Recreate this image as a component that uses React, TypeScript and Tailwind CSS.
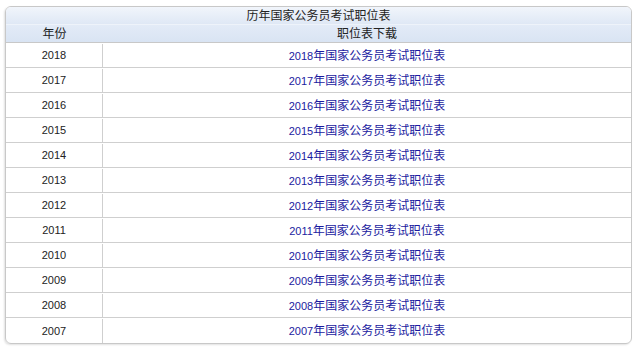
import React from 'react';

const YEARS = [2018, 2017, 2016, 2015, 2014, 2013, 2012, 2011, 2010, 2009, 2008, 2007];

const cjk = "font-['Liberation_Sans','Noto_Sans_CJK_SC',sans-serif]";

export default function App() {
  return (
    <div className={`w-[638px] h-[352px] bg-white pt-[6px] pl-[5px] ${cjk} text-[12px]`}>
      <div className="w-[627px] border border-[#c8c8c8] rounded-[6px] overflow-hidden shadow-[-1px_1px_2px_rgba(0,0,0,0.12)]">
        {/* title bar */}
        <div className="h-[18px] flex items-center justify-center bg-gradient-to-b from-[#f1f5fb] to-[#dfe8f5] text-[#222] border-b border-[#eef3fa]">
          历年国家公务员考试职位表
        </div>
        {/* column header */}
        <div className="h-[18px] pt-px flex bg-gradient-to-b from-[#e3ebf7] to-[#d9e4f3] text-[#222] border-b border-[#c8c8c8]">
          <div className="w-[97px] flex items-center justify-center">年份</div>
          <div className="flex-1 flex items-center justify-center">职位表下载</div>
        </div>
        {YEARS.map((y, i) => (
          <div
            key={y}
            className={`h-[25px] pt-px flex ${i < YEARS.length - 1 ? 'border-b border-[#cfcfcf]' : ''}`}
          >
            <div className="w-[97px] flex items-center justify-center border-r border-[#cfcfcf] text-[#222] text-[11px]">
              {y}
            </div>
            <div className="flex-1 flex items-center justify-center">
              <a href="#" className="text-[#1b1ba0]">
                <span className="text-[11px]">{y}</span>年国家公务员考试职位表
              </a>
            </div>
          </div>
        ))}
      </div>
    </div>
  );
}
